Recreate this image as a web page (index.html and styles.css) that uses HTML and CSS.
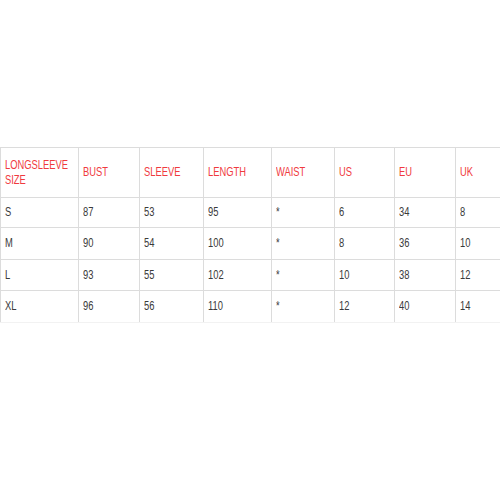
FILE: index.html
```html
<!DOCTYPE html>
<html>
<head>
<meta charset="utf-8">
<link rel="stylesheet" href="styles.css">
</head>
<body>
<table class="sizes">
  <colgroup>
    <col class="c1"><col class="c2"><col class="c3"><col class="c4"><col class="c5"><col class="c6"><col class="c7"><col class="c8">
  </colgroup>
  <tr class="head">
    <td><span>LONGSLEEVE<br>SIZE</span></td>
    <td><span>BUST</span></td>
    <td><span>SLEEVE</span></td>
    <td><span>LENGTH</span></td>
    <td><span>WAIST</span></td>
    <td><span>US</span></td>
    <td><span>EU</span></td>
    <td><span>UK</span></td>
  </tr>
  <tr class="r1">
    <td><span>S</span></td><td><span>87</span></td><td><span>53</span></td><td><span>95</span></td><td><span>*</span></td><td><span>6</span></td><td><span>34</span></td><td><span>8</span></td>
  </tr>
  <tr class="r2">
    <td><span>M</span></td><td><span>90</span></td><td><span>54</span></td><td><span>100</span></td><td><span>*</span></td><td><span>8</span></td><td><span>36</span></td><td><span>10</span></td>
  </tr>
  <tr class="r3">
    <td><span>L</span></td><td><span>93</span></td><td><span>55</span></td><td><span>102</span></td><td><span>*</span></td><td><span>10</span></td><td><span>38</span></td><td><span>12</span></td>
  </tr>
  <tr class="r4">
    <td><span>XL</span></td><td><span>96</span></td><td><span>56</span></td><td><span>110</span></td><td><span>*</span></td><td><span>12</span></td><td><span>40</span></td><td><span>14</span></td>
  </tr>
</table>
</body>
</html>
```

FILE: styles.css
```css
html, body {
  margin: 0;
  padding: 0;
  background: #ffffff;
  overflow: hidden;
  width: 500px;
  height: 500px;
}

.sizes {
  margin-top: 147px;
  border-collapse: collapse;
  table-layout: fixed;
  width: 510px;
  font-family: "Liberation Sans", Arial, sans-serif;
  font-size: 12px;
  color: #3a3a3a;
}

.c1 { width: 78px; }
.c2 { width: 61px; }
.c3 { width: 64px; }
.c4 { width: 68px; }
.c5 { width: 63px; }
.c6 { width: 60px; }
.c7 { width: 61px; }
.c8 { width: 55px; }

.sizes td {
  border: 1px solid #dcdcdc;
  padding: 0 0 0 4px;
  vertical-align: middle;
  text-align: left;
  white-space: nowrap;
  overflow: hidden;
}

.sizes td span {
  display: inline-block;
  transform: scaleX(0.78);
  transform-origin: left center;
  line-height: 15px;
}

.head td {
  color: #f03a3e;
  height: 49px;
}

.r1 td { height: 29px; }
.r2 td { height: 31px; }
.r3 td { height: 30px; }
.r4 td { height: 31px; }
.r4 td { border-bottom-color: #f2f2f2; }
```
